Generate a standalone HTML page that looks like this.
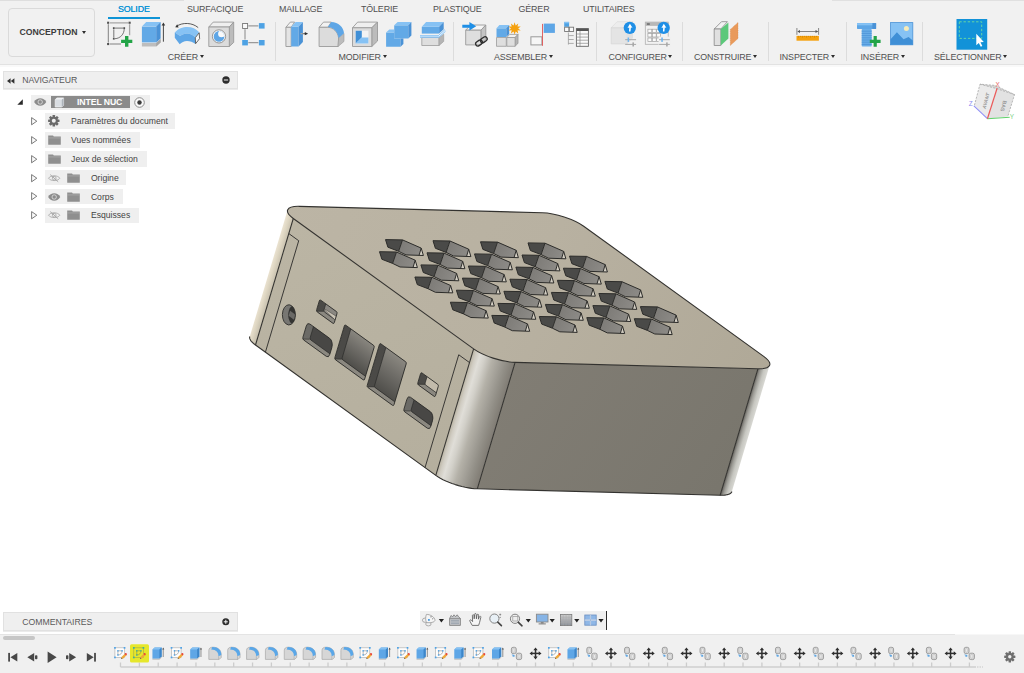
<!DOCTYPE html>
<html lang="fr"><head><meta charset="utf-8"><title>Fusion 360 - INTEL NUC</title>
<style>
html,body{margin:0;padding:0;}
body{width:1024px;height:673px;overflow:hidden;background:#fff;position:relative;font-family:"Liberation Sans",sans-serif;color:#555;}
.abs{position:absolute;}
#toolbar{left:0;top:0;width:1024px;height:64px;background:#f1f1f1;}
#tbline{left:0;top:64px;width:1024px;height:1px;background:#e2e2e2;}
#tbgap{left:0;top:65px;width:1024px;height:2.3px;background:#f9f9f9;}
.tab{position:absolute;top:3.6px;font-size:8.9px;line-height:11px;color:#505050;white-space:nowrap;letter-spacing:-0.13px;}
.tab.on{color:#0f94d6;text-shadow:0 0 0.4px #0f94d6;}
.grp{position:absolute;top:51.5px;font-size:8.9px;line-height:11px;color:#505050;white-space:nowrap;letter-spacing:-0.13px;}
.car{position:absolute;width:0;height:0;border-left:2.9px solid transparent;border-right:2.9px solid transparent;border-top:3.5px solid #2e2e2e;}
.sep{position:absolute;top:22px;width:1px;height:39px;background:#dcdcdc;}
#conc{left:8px;top:8.3px;width:86.8px;height:48.4px;border:1px solid #dadada;border-radius:4px;box-sizing:border-box;}
#conctxt{left:19.4px;top:26.5px;font-size:8.7px;line-height:11px;font-weight:bold;color:#3c3c3c;letter-spacing:0.02px;}
.panel{position:absolute;left:3px;width:235px;background:#efefef;border:1px solid #e1e1e1;box-sizing:border-box;box-shadow:0 0.5px 0.5px rgba(0,0,0,0.08);}
.ptxt{position:absolute;font-size:8.7px;line-height:11px;color:#5a5a5a;letter-spacing:-0.03px;white-space:nowrap;}
.row{position:absolute;height:15.5px;background:#efefef;}
.rtxt{position:absolute;font-size:8.65px;line-height:11px;color:#444;white-space:nowrap;}
svg{position:absolute;overflow:visible;}
</style></head><body>
<div id="toolbar" class="abs"></div><div id="tbline" class="abs"></div><div id="tbgap" class="abs"></div>
<div id="conc" class="abs"></div><div id="conctxt" class="abs">CONCEPTION</div><div class="car" style="left:81.7px;top:31.2px"></div>
<div class="tab on" style="left:118px">SOLIDE</div>
<div class="abs" style="left:108.3px;top:16.6px;width:52px;height:2px;background:#0f94d6"></div>
<div class="tab" style="left:187px">SURFACIQUE</div>
<div class="tab" style="left:279px">MAILLAGE</div>
<div class="tab" style="left:361px">TÔLERIE</div>
<div class="tab" style="left:433px">PLASTIQUE</div>
<div class="tab" style="left:518.5px">GÉRER</div>
<div class="tab" style="left:583px">UTILITAIRES</div>
<div class="grp" style="left:167.7px">CRÉER</div><div class="car" style="left:199.6px;top:54.5px"></div>
<div class="grp" style="left:338.5px">MODIFIER</div><div class="car" style="left:382.5px;top:54.5px"></div>
<div class="grp" style="left:494px">ASSEMBLER</div><div class="car" style="left:548.6px;top:54.5px"></div>
<div class="grp" style="left:608.5px">CONFIGURER</div><div class="car" style="left:668.4px;top:54.5px"></div>
<div class="grp" style="left:694px">CONSTRUIRE</div><div class="car" style="left:752.9px;top:54.5px"></div>
<div class="grp" style="left:779.5px">INSPECTER</div><div class="car" style="left:830.7px;top:54.5px"></div>
<div class="grp" style="left:860.5px">INSÉRER</div><div class="car" style="left:900.6px;top:54.5px"></div>
<div class="grp" style="left:934px">SÉLECTIONNER</div><div class="car" style="left:1003.1px;top:54.5px"></div>
<div class="sep" style="left:275px"></div>
<div class="sep" style="left:453px"></div>
<div class="sep" style="left:596px"></div>
<div class="sep" style="left:682px"></div>
<div class="sep" style="left:768px"></div>
<div class="sep" style="left:846px"></div>
<div class="sep" style="left:922px"></div>
<div class="abs topline" style="left:0;top:0;width:184px;height:1px;background:#dedede"></div><div class="abs topline" style="left:832px;top:0;width:192px;height:1px;background:#e0e0e0"></div>
<svg style="left:0;top:0" width="1024" height="66" viewBox="0 0 1024 66">
<defs>
<linearGradient id="gshaft" x1="0" y1="0" x2="1" y2="0"><stop offset="0" stop-color="#bbb"/><stop offset="1" stop-color="#555"/></linearGradient>
</defs>
<!-- 1 sketch -->
<g>

<path d="M110 22.8 H128.4 M129.6 24.2 V35.2 M110 44 H121" stroke="#a6a6a6" stroke-width="1.3" fill="none"/>
<path d="M108.3 24.2 V42.6" stroke="#666" stroke-width="0.8"/>
<g fill="#505050"><rect x="107.1" y="21.7" width="2.1" height="2.1"/><rect x="128.6" y="21.7" width="2.1" height="2.1"/><rect x="107.1" y="43" width="2.1" height="2.1"/></g>
<path d="M115 28.1 H123 M113.8 29.3 V37.6 M124.2 28.9 C124.2 34 120.4 38.4 115 38.7" stroke="#555" stroke-width="0.8" fill="none"/>
<g fill="#505050"><rect x="112.9" y="27.2" width="1.8" height="1.8"/><rect x="123.3" y="27.2" width="1.8" height="1.8"/><rect x="112.9" y="37.8" width="1.8" height="1.8"/></g>
<path d="M125 36 H128.4 V39.7 H132.3 V43.1 H128.4 V46.8 H125 V43.1 H121.1 V39.7 H125 Z" fill="#22a447"/>
</g>
<!-- 2 extrude -->
<g>
<path d="M141.9 42.9 L156.2 42.9 L160.6 39 L160.6 42.4 L156.2 46.5 L141.9 46.5 Z" fill="#bdbdbd"/><path d="M156.2 42.9 L160.6 39 L160.6 42.4 L156.2 46.5 Z" fill="#a6a6a6"/>
<path d="M141.9 26.6 H156.2 V42.4 H141.9 Z" fill="#62a9e6"/>
<path d="M141.9 26.6 L146.2 21.9 L160.6 21.9 L156.2 26.6 Z" fill="#86c2f4"/>
<path d="M156.2 26.6 L160.6 21.9 L160.6 38.5 L156.2 42.4 Z" fill="#4a92d6"/>
<path d="M163.4 24.6 V41.7" stroke="#333" stroke-width="0.9"/><path d="M161.6 25.5 L163.4 22.5 L165.2 25.5 Z" fill="#333"/>
</g>
<!-- 3 revolve -->
<g>
<path d="M174.8 32.6 C178 28.5 183 27 187.3 27 C192 27 196.2 28.8 199.2 32.3 L195.3 37.5 C193 35 190 33.7 187 33.6 C184.4 33.7 182 34.5 180.2 36.1 Z" fill="#86c2f4"/>
<path d="M174.8 32.6 L180.2 36.1 C182 34.5 184.4 33.7 187 33.6 C190 33.7 193 35 195.3 37.5 L195.5 43.9 C193 42 190 41 187 41 C184 41.2 181.6 42.4 179.7 44.2 L174.8 37.7 Z" fill="#5ea6e6"/>
<path d="M195.3 37.7 L199.2 32.8 L199.6 38.6 L195.6 43.7 Z" fill="#f8f8f8" stroke="#444" stroke-width="0.8" stroke-linejoin="round"/>
<path d="M198.2 27.6 C192 22.4 182.6 22.3 176.6 26.2" stroke="#333" stroke-width="0.8" fill="none"/><path d="M175.2 27.3 L177.2 24.2 L178.6 27.4 Z" fill="#333"/>
</g>
<!-- 4 hole -->
<g stroke="#9a9a9a" stroke-width="0.9" stroke-linejoin="round">
<path d="M208.8 27 L213.2 22.1 L233.7 22.1 L229.3 27 Z" fill="#efefef"/>
<path d="M229.3 27 L233.7 22.1 L233.7 42.4 L229.3 46.5 Z" fill="#bcbcbc"/>
<path d="M208.8 27 H229.3 V46.5 H208.8 Z" fill="#dcdcdc"/>
<circle cx="219" cy="36.4" r="6.6" fill="#fafafa" stroke="#8a8a8a"/>
</g>
<clipPath id="hcp"><circle cx="219" cy="36.4" r="5.3"/></clipPath><circle cx="219" cy="36.4" r="5.3" fill="#5ea6e6"/><circle cx="221.6" cy="33.8" r="3.5" fill="#fafafa" clip-path="url(#hcp)"/>
<!-- 5 pattern -->
<g>
<path d="M248.3 25.8 H258.4 M245 29.2 V39.5 M248.3 42.6 H258.4" stroke="#9a9a9a" stroke-width="1.2"/>
<rect x="242.6" y="23.5" width="5" height="5" fill="#fafafa" stroke="#777" stroke-width="0.9"/>
<rect x="258.9" y="23.1" width="5.7" height="5.5" fill="#4ea2e4"/><rect x="242.2" y="40" width="5.7" height="5.4" fill="#4ea2e4"/><rect x="258.9" y="40" width="5.7" height="5.4" fill="#4ea2e4"/>
</g>
<!-- 6 press pull -->
<g>
<path d="M285.9 27.3 L290.3 22.1 L294.6 22.1 L291.2 27.3 Z" fill="#f2f2f2" stroke="#9a9a9a" stroke-width="0.9" stroke-linejoin="round"/>
<path d="M285.9 27.3 H291.2 V46.5 H285.9 Z" fill="#e4e4e4" stroke="#9a9a9a" stroke-width="0.9" stroke-linejoin="round"/>
<path d="M291.2 26.8 H298.6 V46.5 H291.2 Z" fill="#62a9e6"/>
<path d="M291.2 26.8 L295.6 21.9 L302.9 21.9 L298.6 26.8 Z" fill="#86c2f4"/>
<path d="M298.6 26.8 L302.9 21.9 L302.9 41.9 L298.6 46.5 Z" fill="#4a92d6"/>
<rect x="300.6" y="33" width="5" height="1.3" fill="url(#gshaft)"/><path d="M304.8 32 L308.1 33.65 L304.8 35.3 Z" fill="#2e2e2e"/>
</g>
<!-- 7 fillet -->
<g>
<path d="M319.1 27.3 L323.5 22.1 L331.3 22.1 L327.9 27.3 Z" fill="#f2f2f2" stroke="#9a9a9a" stroke-width="0.9" stroke-linejoin="round"/>
<path d="M319.1 27.3 H327.9 C333.6 27.6 338 32 338.6 38 L338.1 46.5 H319.1 Z" fill="#dcdcdc" stroke="#9a9a9a" stroke-width="0.9" stroke-linejoin="round"/>
<path d="M338.6 38 L344 33.4 L344 41.4 L338.1 46.5 Z" fill="#bcbcbc" stroke="#9a9a9a" stroke-width="0.6" stroke-linejoin="round"/>
<path d="M327.9 27.1 L331.3 22 C338.4 22.4 343.6 27 344 33.3 L338.6 38 C338 32 333.6 27.6 327.9 27.1 Z" fill="#5ea6e6"/>
</g>
<!-- 8 shell -->
<g stroke="#9a9a9a" stroke-width="0.9" stroke-linejoin="round">
<path d="M352.5 27.8 L357.6 22.1 L377.5 22.1 L371.8 27.8 Z" fill="#efefef"/>
<path d="M371.8 27.8 L377.5 22.1 L377.5 41 L371.8 46.5 Z" fill="#bcbcbc"/>
<path d="M352.5 27.8 H371.8 V46.5 H352.5 Z" fill="#dcdcdc"/>
</g>
<rect x="355.7" y="30.7" width="12.7" height="12.9" fill="#f4f4f4"/>
<path d="M355.7 30.7 H361.8 V37.5 L355.7 43.6 Z" fill="#3f8fd6"/><path d="M355.7 43.6 L361.8 37.5 H368.4 V43.6 Z" fill="#86c2f4"/>
<!-- 9 combine -->
<g>
<path d="M394.2 25.3 H408.3 V38.5 H394.2 Z" fill="#62a9e6"/><path d="M394.2 25.3 L397.6 21.9 L411.4 21.9 L408.3 25.3 Z" fill="#86c2f4"/><path d="M408.3 25.3 L411.4 21.9 L411.4 35.6 L408.3 38.5 Z" fill="#4a92d6"/>
<path d="M386.1 32.6 H394.2 V38.5 H400.5 V46.8 H386.1 Z" fill="#62a9e6"/><path d="M386.1 32.6 L389.3 29.5 H394.2 V32.6 Z" fill="#86c2f4"/><path d="M400.5 38.5 H403.4 V43.9 L400.5 46.8 Z" fill="#4a92d6"/>
</g>
<!-- 10 split -->
<g>
<path d="M421.8 37.5 H439.1 V45.5 H421.8 Z" fill="#dedede" stroke="#9a9a9a" stroke-width="0.8"/><path d="M439.1 37.5 L443.7 34.2 V41.4 L439.1 45.5 Z" fill="#b4b4b4" stroke="#9a9a9a" stroke-width="0.6"/>
<path d="M420 36.6 H438.6 L445.2 30.4" stroke="#fff" stroke-width="2" fill="none"/><path d="M420 35.8 H438.3 L444.9 29.7 M420 37.2 H439 L445.6 31.1" stroke="#55aaf0" stroke-width="0.8" fill="none"/>
<path d="M421.8 26.8 H439.1 V33.6 H421.8 Z" fill="#62a9e6"/><path d="M421.8 26.8 L426.1 21.9 L443.7 21.9 L439.1 26.8 Z" fill="#86c2f4"/><path d="M439.1 26.8 L443.7 21.9 L443.7 29.2 L439.1 33.6 Z" fill="#4a92d6"/>
</g>
<!-- 11 derive -->
<g>
<g stroke="#9a9a9a" stroke-width="0.9" stroke-linejoin="round"><path d="M465.7 30.2 L470.6 25 L485.8 25 L480.9 30.2 Z" fill="#f6f6f6"/><path d="M480.9 30.2 L485.8 25 L485.8 39.5 L480.9 44.9 Z" fill="#c4c4c4"/><path d="M465.7 30.2 H480.9 V44.9 H465.7 Z" fill="#dedede"/></g>
<path d="M462.3 24.8 H469.4 V22 L476.2 26.3 L469.4 30.6 V27.8 H462.3 Z" fill="#1f8fe6"/>
<g fill="none" stroke="#2e2e2e" stroke-width="1.3"><rect x="-3.6" y="-2.2" width="7.2" height="4.4" rx="2.2" transform="translate(479 43) rotate(-35)"/><rect x="-3.6" y="-2.2" width="7.2" height="4.4" rx="2.2" transform="translate(483.8 39.8) rotate(-35)"/></g>
</g>
<!-- 12 new component -->
<g>
<g stroke="#9a9a9a" stroke-width="0.8" stroke-linejoin="round"><path d="M496.5 37.5 H506.3 V46.3 H496.5 Z" fill="#dedede"/><path d="M506.8 37.5 L509.7 34.4 H518 L515.1 37.5 Z" fill="#f2f2f2"/><path d="M515.1 37.5 L518 34.4 V43.2 L515.1 46.3 Z" fill="#b4b4b4"/><path d="M506.8 37.5 H515.1 V46.3 H506.8 Z" fill="#dedede"/></g>
<path d="M496.5 28.3 H506.3 V37 H496.5 Z" fill="#62a9e6"/><path d="M496.5 28.3 L499.4 25 H509.2 L506.3 28.3 Z" fill="#86c2f4"/><path d="M506.3 28.3 L509.2 25 V34 L506.3 37 Z" fill="#4a92d6"/>
<path d="M514.6 22.2 L515.7 25.4 L518.3 23.4 L517.5 26.6 L520.7 26.4 L518.2 28.4 L520.7 30.4 L517.5 30.2 L518.3 33.4 L515.7 31.4 L514.6 34.6 L513.5 31.4 L510.9 33.4 L511.7 30.2 L508.5 30.4 L511 28.4 L508.5 26.4 L511.7 26.6 L510.9 23.4 L513.5 25.4 Z" fill="#f5a10f"/>
</g>
<!-- 13 joint -->
<g>
<rect x="530.9" y="36.8" width="11" height="8.1" fill="#f6f6f6" stroke="#999" stroke-width="1"/>
<rect x="543.7" y="23.6" width="11.2" height="9.3" fill="#5ea6e6"/>
<path d="M542.5 23.9 V45.8" stroke="#e05252" stroke-width="0.9"/>
</g>
<!-- 14 rigid group table -->
<g>
<rect x="564.2" y="21.9" width="4.9" height="4.9" fill="#4ea2e4"/><rect x="564.2" y="21.9" width="4.9" height="1.4" fill="#86c2f4"/>
<rect x="564.6" y="27.2" width="4.3" height="4.3" fill="#fafafa" stroke="#777" stroke-width="0.9"/><rect x="569.3" y="27.2" width="4.3" height="4.3" fill="#fafafa" stroke="#777" stroke-width="0.9"/>
<path d="M568.4 32.6 V44.6 M568.4 35.6 H573.7 M568.4 39.5 H573.7 M568.4 43.4 H573.7" stroke="#9a9a9a" stroke-width="0.8" fill="none"/>
<rect x="576.4" y="28.6" width="12" height="17.7" fill="#fafafa" stroke="#666" stroke-width="0.9"/><rect x="576.4" y="28.6" width="12" height="2.4" fill="#555"/>
<path d="M580 31 V46.3 M576.4 34 H588.4 M576.4 37.1 H588.4 M576.4 40.2 H588.4 M576.4 43.3 H588.4" stroke="#888" stroke-width="0.7" fill="none"/>
</g>
<!-- 15 configure -->
<g>
<path d="M611.2 27.8 L617.1 21.7 H633 L627.3 27.8 Z" fill="#ededed" stroke="#d8d8d8" stroke-width="0.6"/><path d="M611.2 27.8 H627.3 V43.9 H611.2 Z" fill="#e4e4e4" stroke="#d4d4d4" stroke-width="0.6"/><path d="M627.3 27.8 L633 21.7 V38 L627.3 43.9 Z" fill="#e0e0e0"/>
<path d="M625.2 39.7 H636.1 M625.2 44.4 H636.1" stroke="#a8a8a8" stroke-width="1"/><rect x="627.6" y="37.5" width="1.5" height="4.4" fill="#6db3ee"/><rect x="632.4" y="42.4" width="1.6" height="4.1" fill="#a8a8a8"/>
<circle cx="629.8" cy="27.8" r="6.15" fill="#1f8fe6"/><path d="M629.9 23.7 L632.5 27.8 L630.9 27.6 L630.5 31.4 L629 31.4 L629.3 27.6 L627.5 27.9 Z" fill="#fff"/>
</g>
<!-- 16 configure table -->
<g>
<rect x="645.3" y="22.1" width="22.9" height="22.2" fill="#f2f2f2" stroke="#b0b0b0" stroke-width="0.8"/><rect x="645.3" y="22.1" width="22.9" height="3.8" fill="#b8b8b8"/><rect x="646.9" y="23.3" width="2.9" height="1.5" fill="#666"/>
<g fill="#fbfbfb" stroke="#a0a0a0" stroke-width="0.7"><rect x="647.9" y="29.2" width="3.9" height="3.4"/><rect x="652.3" y="29.2" width="3.9" height="3.4"/><rect x="656.7" y="29.2" width="3.9" height="3.4"/><rect x="647.9" y="33.6" width="3.9" height="3.4"/><rect x="652.3" y="33.6" width="3.9" height="3.4"/><rect x="656.7" y="33.6" width="3.9" height="3.4"/><rect x="647.9" y="38" width="3.9" height="3.4"/><rect x="652.3" y="38" width="3.9" height="3.4"/><rect x="656.7" y="38" width="3.9" height="3.4"/></g>
<rect x="658.6" y="36.6" width="11.6" height="10.4" fill="#f1f1f1"/>
<path d="M659.1 39.7 H669.8 M659.1 44.4 H669.8" stroke="#a8a8a8" stroke-width="1"/><rect x="661.3" y="37.5" width="1.5" height="4.4" fill="#6db3ee"/><rect x="666.1" y="42.4" width="1.6" height="4.1" fill="#a8a8a8"/>
<circle cx="663.7" cy="27.8" r="6.15" fill="#1f8fe6"/><path d="M663.8 23.7 L666.4 27.8 L664.8 27.6 L664.4 31.4 L662.9 31.4 L663.2 27.6 L661.4 27.9 Z" fill="#fff"/>
</g>
<!-- 17 construct -->
<g>
<path d="M714.2 29 L721.5 21.7 H727.4 L720.8 29 Z" fill="#f2f2f2" stroke="#888" stroke-width="0.8" stroke-linejoin="round"/><path d="M714.2 29 H720.8 V45.5 H714.2 Z" fill="#e0e0e0" stroke="#888" stroke-width="0.8" stroke-linejoin="round"/>
<path d="M720.8 29 L728.4 22.4 V38.5 L720.8 45.5 Z" fill="#5cc87a"/>
<path d="M730.3 29.4 L738 22.4 V38.5 L730.3 45.5 Z" fill="#e99a5b" stroke="#d98a4a" stroke-width="0.5" stroke-dasharray="1 0.8"/>
</g>
<!-- 18 inspect -->
<g>
<path d="M796.9 28 V34.8 M818.6 28 V34.8 M798 31.5 H817.5" stroke="#6a6a6a" stroke-width="0.8" fill="none"/><path d="M797.3 31.5 L800 30.1 V32.9 Z M818.2 31.5 L815.5 30.1 V32.9 Z" fill="#555"/>
<rect x="796.5" y="35.9" width="22.4" height="4.8" fill="#f5a10f"/><path d="M798.5 35.9 V37.6 M800.5 35.9 V37 M802.5 35.9 V37.6 M804.5 35.9 V37 M806.5 35.9 V37.6 M808.5 35.9 V37 M810.5 35.9 V37.6 M812.5 35.9 V37 M814.5 35.9 V37.6 M816.5 35.9 V37" stroke="#c97f00" stroke-width="0.6"/>
</g>
<!-- 19 bolt -->
<g>
<rect x="861.7" y="28.9" width="10" height="17.6" rx="0.8" fill="#6aaee8"/><path d="M861.7 31.2 H871.7 M861.7 33.4 H871.7 M861.7 35.6 H871.7 M861.7 37.8 H871.7 M861.7 40 H871.7 M861.7 42.2 H871.7 M861.7 44.4 H871.7" stroke="#4a92d6" stroke-width="0.8"/>
<rect x="857" y="23.1" width="19.1" height="5.8" rx="0.6" fill="#5ea6e6"/><rect x="857" y="23.1" width="19.1" height="2.2" fill="#86c2f4"/><rect x="872.4" y="23.1" width="3.7" height="5.8" fill="#4a92d6"/>
<path d="M873.6 36 H876.8 V39.8 H880.6 V43 H876.8 V46.8 H873.6 V43 H869.8 V39.8 H873.6 Z" fill="#22a447"/>
</g>
<!-- 20 image -->
<g>
<rect x="890.6" y="22.6" width="22.2" height="22.2" fill="#86c2f4" stroke="#4a92d6" stroke-width="0.8"/>
<path d="M890.6 39.2 L896.9 32.3 L903.5 39.2 L908.6 37 L912.8 40.6 V44.8 H890.6 Z" fill="#3f8fd6"/>
<circle cx="906.4" cy="28.5" r="2.5" fill="#f5ebba"/>
</g>
<!-- 21 select -->
<g>
<rect x="956.5" y="19" width="30.7" height="30.7" fill="#1292d8"/>
<rect x="959.3" y="21.8" width="22.4" height="16.6" fill="none" stroke="#66d4a4" stroke-width="1" stroke-dasharray="2.4 1.8"/>
<path d="M976.3 33.7 L976.3 45.2 L978.8 42.9 L980.8 46.7 L982.3 45.9 L980.5 42.2 L983.8 41.9 Z" fill="#fff"/>
</g>
</svg>
<div class="panel" style="top:70.8px;height:18.7px"></div>
<svg style="left:7px;top:77.5px" width="8" height="6" viewBox="0 0 8 6"><path d="M3.6 0.3 L3.6 5.7 L0 3 Z M7.4 0.3 L7.4 5.7 L3.8 3 Z" fill="#333"/></svg>
<div class="ptxt" style="left:22.3px;top:75.3px">NAVIGATEUR</div>
<svg style="left:221.5px;top:76.3px" width="8" height="8" viewBox="0 0 8 8"><circle cx="4" cy="4" r="3.7" fill="#2c2c2c"/><rect x="1.9" y="3.5" width="4.2" height="1" fill="#efefef"/></svg>

<!-- row 0 -->
<svg style="left:17px;top:99px" width="6" height="6" viewBox="0 0 6 6"><path d="M5.8 0.3 L5.8 5.8 L0.3 5.8 Z" fill="#2b2b2b"/></svg>
<div class="row" style="left:31px;top:94.6px;width:119px;height:15.2px"></div>
<svg class="eye" style="left:33.6px;top:98.2px" width="12.4" height="8" viewBox="0 0 12.4 8"><path d="M0.1 4 C2.6 -0.9 9.8 -0.9 12.3 4 C9.8 8.9 2.6 8.9 0.1 4 Z" fill="#8c8c8c"/><circle cx="6.2" cy="4" r="2.2" fill="none" stroke="#e4e4e4" stroke-width="0.75"/></svg>
<div class="abs" style="left:50.8px;top:96.2px;width:79.5px;height:11.6px;background:#8b8b8b"></div>
<svg style="left:54.4px;top:96.6px" width="11" height="11" viewBox="0 0 11 11"><path d="M1.2 2.6 L3 0.9 L9.6 0.9 L9.6 8.2 L7.8 10 L1.2 10 Z" fill="#d9dde2" stroke="#f4f4f4" stroke-width="0.7"/><path d="M7.8 2.6 L9.6 0.9 L9.6 8.2 L7.8 10 Z" fill="#aeb4bb"/><path d="M1.2 2.6 L3 0.9 L9.6 0.9 L7.8 2.6 Z" fill="#eef0f2"/></svg>
<div class="rtxt" style="left:77px;top:97.3px;color:#fff;font-weight:bold;font-size:8.7px;letter-spacing:-0.1px">INTEL NUC</div>
<svg style="left:134px;top:96.6px" width="11" height="11" viewBox="0 0 11 11"><circle cx="5.5" cy="5.5" r="4.8" fill="#fafafa" stroke="#8a8a8a" stroke-width="1"/><circle cx="5.5" cy="5.5" r="2.2" fill="#3a3a3a"/></svg>
<svg style="left:30.8px;top:116.8px" width="6.4" height="8.4" viewBox="0 0 6.4 8.4"><path d="M0.6 0.6 L5.8 4.2 L0.6 7.8 Z" fill="#fafafa" stroke="#505050" stroke-width="0.75" stroke-linejoin="round"/></svg>
<div class="row" style="left:45.2px;top:113.3px;width:130.0px;height:15.3px"></div>
<svg style="left:48.2px;top:115.2px" width="11.6" height="11.6" viewBox="-5.8 -5.8 11.6 11.6"><g fill="#6a6a6a"><rect x="-1.3" y="-5.7" width="2.6" height="11.4" rx="0.5" transform="rotate(0)"/><rect x="-1.3" y="-5.7" width="2.6" height="11.4" rx="0.5" transform="rotate(45)"/><rect x="-1.3" y="-5.7" width="2.6" height="11.4" rx="0.5" transform="rotate(90)"/><rect x="-1.3" y="-5.7" width="2.6" height="11.4" rx="0.5" transform="rotate(135)"/></g><circle r="4" fill="#6a6a6a"/><circle r="2" fill="#efefef"/></svg>
<div class="rtxt" style="left:71.1px;top:116.0px">Paramètres du document</div>
<svg style="left:30.8px;top:135.8px" width="6.4" height="8.4" viewBox="0 0 6.4 8.4"><path d="M0.6 0.6 L5.8 4.2 L0.6 7.8 Z" fill="#fafafa" stroke="#505050" stroke-width="0.75" stroke-linejoin="round"/></svg>
<div class="row" style="left:45.2px;top:132.3px;width:95.2px;height:15.3px"></div>
<svg style="left:47.5px;top:135.0px" width="13" height="10" viewBox="0 0 13 10"><path d="M0.2 0.4 L5 0.4 L5.8 1.6 L12.8 1.6 L12.8 9.8 L0.2 9.8 Z" fill="#8f8f8f"/><path d="M0.2 2.9 L12.8 2.9" stroke="#b4b4b4" stroke-width="0.6"/></svg>
<div class="rtxt" style="left:71.1px;top:135.0px">Vues nommées</div>
<svg style="left:30.8px;top:154.8px" width="6.4" height="8.4" viewBox="0 0 6.4 8.4"><path d="M0.6 0.6 L5.8 4.2 L0.6 7.8 Z" fill="#fafafa" stroke="#505050" stroke-width="0.75" stroke-linejoin="round"/></svg>
<div class="row" style="left:45.2px;top:151.3px;width:101.6px;height:15.3px"></div>
<svg style="left:47.5px;top:154.0px" width="13" height="10" viewBox="0 0 13 10"><path d="M0.2 0.4 L5 0.4 L5.8 1.6 L12.8 1.6 L12.8 9.8 L0.2 9.8 Z" fill="#8f8f8f"/><path d="M0.2 2.9 L12.8 2.9" stroke="#b4b4b4" stroke-width="0.6"/></svg>
<div class="rtxt" style="left:71.1px;top:154.0px">Jeux de sélection</div>
<svg style="left:30.8px;top:173.6px" width="6.4" height="8.4" viewBox="0 0 6.4 8.4"><path d="M0.6 0.6 L5.8 4.2 L0.6 7.8 Z" fill="#fafafa" stroke="#505050" stroke-width="0.75" stroke-linejoin="round"/></svg>
<div class="row" style="left:45.2px;top:170.1px;width:80.5px;height:15.3px"></div>
<svg style="left:66.8px;top:172.8px" width="13" height="10" viewBox="0 0 13 10"><path d="M0.2 0.4 L5 0.4 L5.8 1.6 L12.8 1.6 L12.8 9.8 L0.2 9.8 Z" fill="#8f8f8f"/><path d="M0.2 2.9 L12.8 2.9" stroke="#b4b4b4" stroke-width="0.6"/></svg>
<svg style="left:47.6px;top:173.6px" width="12.4" height="8.4" viewBox="0 0 12.4 8.4"><path d="M0.5 4.2 C2.7 1 9.7 1 11.9 4.2 C9.7 7.4 2.7 7.4 0.5 4.2 Z" fill="none" stroke="#a2a2a2" stroke-width="0.8"/><circle cx="6.2" cy="4.2" r="1.9" fill="none" stroke="#a2a2a2" stroke-width="0.8"/><path d="M2.2 0.6 L10.2 7.8" stroke="#a2a2a2" stroke-width="0.9"/></svg>
<div class="rtxt" style="left:90.9px;top:172.8px">Origine</div>
<svg style="left:30.8px;top:192.4px" width="6.4" height="8.4" viewBox="0 0 6.4 8.4"><path d="M0.6 0.6 L5.8 4.2 L0.6 7.8 Z" fill="#fafafa" stroke="#505050" stroke-width="0.75" stroke-linejoin="round"/></svg>
<div class="row" style="left:45.2px;top:188.9px;width:77.7px;height:15.3px"></div>
<svg style="left:66.8px;top:191.6px" width="13" height="10" viewBox="0 0 13 10"><path d="M0.2 0.4 L5 0.4 L5.8 1.6 L12.8 1.6 L12.8 9.8 L0.2 9.8 Z" fill="#8f8f8f"/><path d="M0.2 2.9 L12.8 2.9" stroke="#b4b4b4" stroke-width="0.6"/></svg>
<svg style="left:47.6px;top:192.6px" width="12.4" height="8" viewBox="0 0 12.4 8"><path d="M0.1 4 C2.6 -0.9 9.8 -0.9 12.3 4 C9.8 8.9 2.6 8.9 0.1 4 Z" fill="#8c8c8c"/><circle cx="6.2" cy="4" r="2.2" fill="none" stroke="#e4e4e4" stroke-width="0.75"/></svg>
<div class="rtxt" style="left:90.9px;top:191.6px">Corps</div>
<svg style="left:30.8px;top:211.2px" width="6.4" height="8.4" viewBox="0 0 6.4 8.4"><path d="M0.6 0.6 L5.8 4.2 L0.6 7.8 Z" fill="#fafafa" stroke="#505050" stroke-width="0.75" stroke-linejoin="round"/></svg>
<div class="row" style="left:45.2px;top:207.7px;width:93.4px;height:15.3px"></div>
<svg style="left:66.8px;top:210.4px" width="13" height="10" viewBox="0 0 13 10"><path d="M0.2 0.4 L5 0.4 L5.8 1.6 L12.8 1.6 L12.8 9.8 L0.2 9.8 Z" fill="#8f8f8f"/><path d="M0.2 2.9 L12.8 2.9" stroke="#b4b4b4" stroke-width="0.6"/></svg>
<svg style="left:47.6px;top:211.2px" width="12.4" height="8.4" viewBox="0 0 12.4 8.4"><path d="M0.5 4.2 C2.7 1 9.7 1 11.9 4.2 C9.7 7.4 2.7 7.4 0.5 4.2 Z" fill="none" stroke="#a2a2a2" stroke-width="0.8"/><circle cx="6.2" cy="4.2" r="1.9" fill="none" stroke="#a2a2a2" stroke-width="0.8"/><path d="M2.2 0.6 L10.2 7.8" stroke="#a2a2a2" stroke-width="0.9"/></svg>
<div class="rtxt" style="left:90.9px;top:210.4px">Esquisses</div>
<svg style="left:0;top:0" width="1024" height="673" viewBox="0 0 1024 673">
<defs>
<linearGradient id="gff" gradientUnits="userSpaceOnUse" x1="473.6" y1="348.9" x2="515.4" y2="361.4"><stop offset="0" stop-color="#b9b3a3"/><stop offset="0.08" stop-color="#d0ccc2"/><stop offset="0.18" stop-color="#e0deD8"/><stop offset="0.3" stop-color="#d2d0c9"/><stop offset="0.48" stop-color="#b4b1a8"/><stop offset="0.65" stop-color="#a29f97"/><stop offset="0.8" stop-color="#928f87"/><stop offset="0.93" stop-color="#86827a"/><stop offset="1" stop-color="#7f7b74"/></linearGradient>
<linearGradient id="gls" gradientUnits="userSpaceOnUse" x1="287.6" y1="210.1" x2="295.1" y2="212.4"><stop offset="0" stop-color="#ece4d2"/><stop offset="0.5" stop-color="#ddd5c1"/><stop offset="1" stop-color="#c9c2b0"/></linearGradient>
<linearGradient id="grs" gradientUnits="userSpaceOnUse" x1="757.9" y1="368.8" x2="767.7" y2="371.7"><stop offset="0" stop-color="#66645f"/><stop offset="0.25" stop-color="#9a9993"/><stop offset="0.6" stop-color="#c6c6c0"/><stop offset="1" stop-color="#d9d9d4"/></linearGradient>
<linearGradient id="glf" gradientUnits="userSpaceOnUse" x1="297.2" y1="221.3" x2="431.9" y2="472.6"><stop offset="0" stop-color="#bbb5a4"/><stop offset="1" stop-color="#b5af9e"/></linearGradient>
<linearGradient id="grf" gradientUnits="userSpaceOnUse" x1="520.3" y1="362.5" x2="714.9" y2="495.1"><stop offset="0" stop-color="#817d74"/><stop offset="1" stop-color="#79766d"/></linearGradient>
<linearGradient id="gtf" x1="0" y1="0" x2="1" y2="1"><stop offset="0" stop-color="#bcb5a5"/><stop offset="0.5" stop-color="#b8b1a1"/><stop offset="1" stop-color="#afa897"/></linearGradient>
<linearGradient id="gvl" x1="0" y1="0" x2="1" y2="0.3"><stop offset="0" stop-color="#7b7975"/><stop offset="1" stop-color="#8b8985"/></linearGradient>
<linearGradient id="gub" x1="0" y1="0" x2="0" y2="1"><stop offset="0" stop-color="#918e86"/><stop offset="0.5" stop-color="#6f6d68"/><stop offset="1" stop-color="#4f4e4a"/></linearGradient>
<g id="vent"><path d="M0 0 L17 0.3 L13.1 11.7 L2.4 7.6 Z" fill="#4a4a48"/><path d="M17 0.3 L35.7 8.5 L33.6 15.6 L20.5 15.3 L13.1 11.7 Z" fill="url(#gvl)"/><path d="M35.7 8.5 L37.9 15.9 L33.6 15.6 Z" fill="#d3cec3"/><path d="M0 0 L17 0.3 L35.7 8.5 L37.9 15.9 L20.5 15.3 L13.1 11.7 L2.4 7.6 Z M17 0.3 L13.1 11.7 M35.7 8.5 L33.6 15.6" fill="none" stroke="#2c2c2a" stroke-width="1" stroke-linejoin="round"/></g>
</defs>
<path d="M287.6 210.1 L287.5 210.3 L287.5 210.6 L287.4 210.8 L287.4 211.1 L287.5 211.4 L287.5 211.6 L287.6 211.9 L287.6 212.2 L287.7 212.5 L287.9 212.8 L288.0 213.0 L288.2 213.3 L288.3 213.6 L288.5 213.9 L288.7 214.3 L289.0 214.6 L289.2 214.9 L289.5 215.2 L289.8 215.5 L290.1 215.8 L290.5 216.2 L290.8 216.5 L291.2 216.8 L291.6 217.2 L292.0 217.5 L292.4 217.8 L292.8 218.2 L293.3 218.5 L255.5 345.0 L255.0 344.7 L254.6 344.3 L254.2 344.0 L253.8 343.7 L253.4 343.3 L253.0 343.0 L252.7 342.7 L252.3 342.3 L252.0 342.0 L251.7 341.7 L251.4 341.4 L251.2 341.1 L250.9 340.8 L250.7 340.4 L250.5 340.1 L250.4 339.8 L250.2 339.5 L250.1 339.3 L249.9 339.0 L249.8 338.7 L249.8 338.4 L249.7 338.1 L249.7 337.9 L249.6 337.6 L249.6 337.3 L249.7 337.1 L249.7 336.8 L249.8 336.6 Z" fill="url(#gls)"/>
<path d="M293.3 218.5 L473.6 348.9 L435.8 475.4 L255.5 345.0 Z" fill="url(#glf)"/>
<path d="M473.6 348.9 L475.7 350.3 L478.1 351.8 L480.8 353.2 L483.6 354.5 L486.7 355.8 L489.8 357.0 L493.1 358.1 L496.4 359.1 L499.7 360.0 L503.0 360.8 L506.3 361.4 L509.4 361.9 L512.3 362.2 L515.1 362.3 L477.3 488.8 L474.5 488.7 L471.6 488.4 L468.5 487.9 L465.2 487.3 L461.9 486.5 L458.6 485.6 L455.3 484.6 L452.0 483.5 L448.9 482.3 L445.8 481.0 L443.0 479.7 L440.3 478.3 L437.9 476.8 L435.8 475.4 Z" fill="url(#gff)"/>
<path d="M515.1 362.3 L757.9 368.8 L720.1 495.3 L477.3 488.8 Z" fill="url(#grf)"/>
<path d="M757.9 368.8 L758.5 368.8 L759.1 368.8 L759.7 368.8 L760.3 368.8 L760.8 368.7 L761.4 368.7 L761.9 368.7 L762.5 368.6 L763.0 368.6 L763.4 368.5 L763.9 368.4 L764.4 368.3 L764.8 368.2 L765.2 368.1 L765.7 368.0 L766.0 367.9 L766.4 367.8 L766.8 367.7 L767.1 367.5 L767.4 367.4 L767.7 367.2 L768.0 367.0 L768.3 366.9 L768.5 366.7 L768.7 366.5 L768.9 366.3 L769.1 366.1 L769.3 365.9 L769.4 365.7 L769.5 365.5 L769.6 365.2 L769.7 365.0 L731.9 491.5 L731.8 491.7 L731.7 492.0 L731.6 492.2 L731.5 492.4 L731.3 492.6 L731.1 492.8 L730.9 493.0 L730.7 493.2 L730.5 493.4 L730.2 493.5 L729.9 493.7 L729.6 493.9 L729.3 494.0 L729.0 494.2 L728.6 494.3 L728.2 494.4 L727.9 494.5 L727.4 494.6 L727.0 494.7 L726.6 494.8 L726.1 494.9 L725.6 495.0 L725.2 495.1 L724.7 495.1 L724.1 495.2 L723.6 495.2 L723.0 495.2 L722.5 495.3 L721.9 495.3 L721.3 495.3 L720.7 495.3 L720.1 495.3 Z" fill="url(#grs)"/>
<path d="M249.8 336.6 L249.7 336.8 L249.7 337.1 L249.6 337.3 L249.6 337.6 L249.7 337.9 L249.7 338.1 L249.8 338.4 L249.8 338.7 L249.9 339.0 L250.1 339.3 L250.2 339.5 L250.4 339.8 L250.5 340.1 L250.7 340.4 L250.9 340.8 L251.2 341.1 L251.4 341.4 L251.7 341.7 L252.0 342.0 L252.3 342.3 L252.7 342.7 L253.0 343.0 L253.4 343.3 L253.8 343.7 L254.2 344.0 L254.6 344.3 L255.0 344.7 L255.5 345.0 L435.8 475.4 L435.8 475.4 L437.9 476.8 L440.3 478.3 L443.0 479.7 L445.8 481.0 L448.9 482.3 L452.0 483.5 L455.3 484.6 L458.6 485.6 L461.9 486.5 L465.2 487.3 L468.5 487.9 L471.6 488.4 L474.5 488.7 L477.3 488.8 L720.1 495.3 L720.1 495.3 L720.7 495.3 L721.3 495.3 L721.9 495.3 L722.5 495.3 L723.0 495.2 L723.6 495.2 L724.1 495.2 L724.7 495.1 L725.2 495.1 L725.6 495.0 L726.1 494.9 L726.6 494.8 L727.0 494.7 L727.4 494.6 L727.9 494.5 L728.2 494.4 L728.6 494.3 L729.0 494.2 L729.3 494.0 L729.6 493.9 L729.9 493.7 L730.2 493.5 L730.5 493.4 L730.7 493.2 L730.9 493.0 L731.1 492.8 L731.3 492.6 L731.5 492.4 L731.6 492.2 L731.7 492.0 L731.8 491.7 L731.9 491.5" fill="none" stroke="#33322f" stroke-width="1.1" stroke-linejoin="round"/>
<path d="M293.3 218.5 L255.5 345.0" stroke="#33322f" stroke-width="1.05" fill="none"/>
<path d="M473.6 348.9 L435.8 475.4" stroke="#33322f" stroke-width="1.05" fill="none"/>
<path d="M515.1 362.3 L477.3 488.8" stroke="#33322f" stroke-width="1.05" fill="none"/>
<path d="M757.9 368.8 L720.1 495.3" stroke="#33322f" stroke-width="1.05" fill="none"/>
<g transform="matrix(215.7 156.0 -37.8 126.5 275.6 205.7)">
<path d="M0.082 0.119 L0.128 0.119 L0.128 1" fill="none" stroke="#33322f" stroke-width="0.95" vector-effect="non-scaling-stroke"/>
<path d="M0.918 0.108 L0.868 0.108 L0.868 1" fill="none" stroke="#33322f" stroke-width="0.95" vector-effect="non-scaling-stroke"/>
<clipPath id="cps1"><path d="M0.2796 0.4020 L0.3524 0.4020 A0.0046 0.0120 0 0 1 0.3570 0.4140 L0.3570 0.4830 A0.0046 0.0120 0 0 1 0.3524 0.4950 L0.2796 0.4950 A0.0046 0.0120 0 0 1 0.2750 0.4830 L0.2750 0.4140 A0.0046 0.0120 0 0 1 0.2796 0.4020 Z"/></clipPath><g clip-path="url(#cps1)"><path d="M0.2796 0.4020 L0.3524 0.4020 A0.0046 0.0120 0 0 1 0.3570 0.4140 L0.3570 0.4830 A0.0046 0.0120 0 0 1 0.3524 0.4950 L0.2796 0.4950 A0.0046 0.0120 0 0 1 0.2750 0.4830 L0.2750 0.4140 A0.0046 0.0120 0 0 1 0.2796 0.4020 Z" fill="#4b4a47"/><path d="M0.275 0.495 L0.357 0.495 L0.3851 0.4615 L0.3031 0.4615 Z" fill="#8b8880"/><path d="M0.3076 0.3685 L0.3805 0.3685 A0.0046 0.0120 0 0 1 0.3851 0.3805 L0.3851 0.4495 A0.0046 0.0120 0 0 1 0.3805 0.4615 L0.3076 0.4615 A0.0046 0.0120 0 0 1 0.3031 0.4495 L0.3031 0.3805 A0.0046 0.0120 0 0 1 0.3076 0.3685 Z" fill="#8a8781" stroke="#2b2b29" stroke-width="0.7" vector-effect="non-scaling-stroke"/><path d="M0.3031 0.4411 L0.3570 0.4336 L0.3570 0.4615 Z" fill="#cbc4b5"/><path d="M0.3031 0.4411 L0.3570 0.4336" stroke="#3a3a38" stroke-width="0.5" vector-effect="non-scaling-stroke"/><path d="M0.275 0.495 L0.3031 0.4615" stroke="#2b2b29" stroke-width="0.6" vector-effect="non-scaling-stroke"/></g><path d="M0.2796 0.4020 L0.3524 0.4020 A0.0046 0.0120 0 0 1 0.3570 0.4140 L0.3570 0.4830 A0.0046 0.0120 0 0 1 0.3524 0.4950 L0.2796 0.4950 A0.0046 0.0120 0 0 1 0.2750 0.4830 L0.2750 0.4140 A0.0046 0.0120 0 0 1 0.2796 0.4020 Z" fill="none" stroke="#2b2b29" stroke-width="0.9" vector-effect="non-scaling-stroke"/>
<clipPath id="cpr1"><path d="M0.2654 0.6080 L0.3570 0.6080 A0.0190 0.0500 0 0 1 0.3760 0.6580 L0.3760 0.7110 A0.0114 0.0300 0 0 1 0.3646 0.7410 L0.2597 0.7410 A0.0057 0.0150 0 0 1 0.2540 0.7260 L0.2540 0.6380 A0.0114 0.0300 0 0 1 0.2654 0.6080 Z"/></clipPath><g clip-path="url(#cpr1)"><path d="M0.2654 0.6080 L0.3570 0.6080 A0.0190 0.0500 0 0 1 0.3760 0.6580 L0.3760 0.7110 A0.0114 0.0300 0 0 1 0.3646 0.7410 L0.2597 0.7410 A0.0057 0.0150 0 0 1 0.2540 0.7260 L0.2540 0.6380 A0.0114 0.0300 0 0 1 0.2654 0.6080 Z" fill="#6b6a66"/><path d="M0.254 0.741 L0.376 0.741 L0.4041 0.7075 L0.2821 0.7075 Z" fill="#8b8880"/><path d="M0.2935 0.5745 L0.3851 0.5745 A0.0190 0.0500 0 0 1 0.4041 0.6245 L0.4041 0.6775 A0.0114 0.0300 0 0 1 0.3926 0.7075 L0.2878 0.7075 A0.0057 0.0150 0 0 1 0.2821 0.6925 L0.2821 0.6045 A0.0114 0.0300 0 0 1 0.2935 0.5745 Z" fill="#484745" stroke="#2b2b29" stroke-width="0.7" vector-effect="non-scaling-stroke"/><path d="M0.254 0.741 L0.2821 0.7075" stroke="#2b2b29" stroke-width="0.6" vector-effect="non-scaling-stroke"/></g><path d="M0.2654 0.6080 L0.3570 0.6080 A0.0190 0.0500 0 0 1 0.3760 0.6580 L0.3760 0.7110 A0.0114 0.0300 0 0 1 0.3646 0.7410 L0.2597 0.7410 A0.0057 0.0150 0 0 1 0.2540 0.7260 L0.2540 0.6380 A0.0114 0.0300 0 0 1 0.2654 0.6080 Z" fill="none" stroke="#2b2b29" stroke-width="0.9" vector-effect="non-scaling-stroke"/>
<clipPath id="cpu1"><path d="M0.4036 0.4470 L0.5324 0.4470 A0.0046 0.0120 0 0 1 0.5370 0.4590 L0.5370 0.7080 A0.0046 0.0120 0 0 1 0.5324 0.7200 L0.4036 0.7200 A0.0046 0.0120 0 0 1 0.3990 0.7080 L0.3990 0.4590 A0.0046 0.0120 0 0 1 0.4036 0.4470 Z"/></clipPath><g clip-path="url(#cpu1)"><path d="M0.4036 0.4470 L0.5324 0.4470 A0.0046 0.0120 0 0 1 0.5370 0.4590 L0.5370 0.7080 A0.0046 0.0120 0 0 1 0.5324 0.7200 L0.4036 0.7200 A0.0046 0.0120 0 0 1 0.3990 0.7080 L0.3990 0.4590 A0.0046 0.0120 0 0 1 0.4036 0.4470 Z" fill="#4b4a47"/><path d="M0.399 0.72 L0.537 0.72 L0.5651 0.6865 L0.4271 0.6865 Z" fill="#8b8880"/><path d="M0.4316 0.4135 L0.5605 0.4135 A0.0046 0.0120 0 0 1 0.5651 0.4255 L0.5651 0.6745 A0.0046 0.0120 0 0 1 0.5605 0.6865 L0.4316 0.6865 A0.0046 0.0120 0 0 1 0.4271 0.6745 L0.4271 0.4255 A0.0046 0.0120 0 0 1 0.4316 0.4135 Z" fill="url(#gub)" stroke="#2b2b29" stroke-width="0.7" vector-effect="non-scaling-stroke"/><path d="M0.399 0.72 L0.4271 0.6865" stroke="#2b2b29" stroke-width="0.6" vector-effect="non-scaling-stroke"/></g><path d="M0.4036 0.4470 L0.5324 0.4470 A0.0046 0.0120 0 0 1 0.5370 0.4590 L0.5370 0.7080 A0.0046 0.0120 0 0 1 0.5324 0.7200 L0.4036 0.7200 A0.0046 0.0120 0 0 1 0.3990 0.7080 L0.3990 0.4590 A0.0046 0.0120 0 0 1 0.4036 0.4470 Z" fill="none" stroke="#2b2b29" stroke-width="0.9" vector-effect="non-scaling-stroke"/>
<clipPath id="cpu2"><path d="M0.5586 0.4030 L0.6734 0.4030 A0.0046 0.0120 0 0 1 0.6780 0.4150 L0.6780 0.7360 A0.0046 0.0120 0 0 1 0.6734 0.7480 L0.5586 0.7480 A0.0046 0.0120 0 0 1 0.5540 0.7360 L0.5540 0.4150 A0.0046 0.0120 0 0 1 0.5586 0.4030 Z"/></clipPath><g clip-path="url(#cpu2)"><path d="M0.5586 0.4030 L0.6734 0.4030 A0.0046 0.0120 0 0 1 0.6780 0.4150 L0.6780 0.7360 A0.0046 0.0120 0 0 1 0.6734 0.7480 L0.5586 0.7480 A0.0046 0.0120 0 0 1 0.5540 0.7360 L0.5540 0.4150 A0.0046 0.0120 0 0 1 0.5586 0.4030 Z" fill="#4b4a47"/><path d="M0.554 0.748 L0.678 0.748 L0.7061 0.7145 L0.5821 0.7145 Z" fill="#8b8880"/><path d="M0.5866 0.3695 L0.7015 0.3695 A0.0046 0.0120 0 0 1 0.7061 0.3815 L0.7061 0.7025 A0.0046 0.0120 0 0 1 0.7015 0.7145 L0.5866 0.7145 A0.0046 0.0120 0 0 1 0.5821 0.7025 L0.5821 0.3815 A0.0046 0.0120 0 0 1 0.5866 0.3695 Z" fill="url(#gub)" stroke="#2b2b29" stroke-width="0.7" vector-effect="non-scaling-stroke"/><path d="M0.554 0.748 L0.5821 0.7145" stroke="#2b2b29" stroke-width="0.6" vector-effect="non-scaling-stroke"/></g><path d="M0.5586 0.4030 L0.6734 0.4030 A0.0046 0.0120 0 0 1 0.6780 0.4150 L0.6780 0.7360 A0.0046 0.0120 0 0 1 0.6734 0.7480 L0.5586 0.7480 A0.0046 0.0120 0 0 1 0.5540 0.7360 L0.5540 0.4150 A0.0046 0.0120 0 0 1 0.5586 0.4030 Z" fill="none" stroke="#2b2b29" stroke-width="0.9" vector-effect="non-scaling-stroke"/>
<clipPath id="cps2"><path d="M0.7486 0.3990 L0.8214 0.3990 A0.0046 0.0120 0 0 1 0.8260 0.4110 L0.8260 0.4820 A0.0046 0.0120 0 0 1 0.8214 0.4940 L0.7486 0.4940 A0.0046 0.0120 0 0 1 0.7440 0.4820 L0.7440 0.4110 A0.0046 0.0120 0 0 1 0.7486 0.3990 Z"/></clipPath><g clip-path="url(#cps2)"><path d="M0.7486 0.3990 L0.8214 0.3990 A0.0046 0.0120 0 0 1 0.8260 0.4110 L0.8260 0.4820 A0.0046 0.0120 0 0 1 0.8214 0.4940 L0.7486 0.4940 A0.0046 0.0120 0 0 1 0.7440 0.4820 L0.7440 0.4110 A0.0046 0.0120 0 0 1 0.7486 0.3990 Z" fill="#4b4a47"/><path d="M0.744 0.494 L0.826 0.494 L0.8540 0.4605 L0.7721 0.4605 Z" fill="#8b8880"/><path d="M0.7766 0.3655 L0.8495 0.3655 A0.0046 0.0120 0 0 1 0.8540 0.3775 L0.8540 0.4485 A0.0046 0.0120 0 0 1 0.8495 0.4605 L0.7766 0.4605 A0.0046 0.0120 0 0 1 0.7721 0.4485 L0.7721 0.3775 A0.0046 0.0120 0 0 1 0.7766 0.3655 Z" fill="#c2bbab" stroke="#2b2b29" stroke-width="0.7" vector-effect="non-scaling-stroke"/><path d="M0.744 0.494 L0.7721 0.4605" stroke="#2b2b29" stroke-width="0.6" vector-effect="non-scaling-stroke"/></g><path d="M0.7486 0.3990 L0.8214 0.3990 A0.0046 0.0120 0 0 1 0.8260 0.4110 L0.8260 0.4820 A0.0046 0.0120 0 0 1 0.8214 0.4940 L0.7486 0.4940 A0.0046 0.0120 0 0 1 0.7440 0.4820 L0.7440 0.4110 A0.0046 0.0120 0 0 1 0.7486 0.3990 Z" fill="none" stroke="#2b2b29" stroke-width="0.9" vector-effect="non-scaling-stroke"/>
<clipPath id="cpr2"><path d="M0.7324 0.6110 L0.8240 0.6110 A0.0190 0.0500 0 0 1 0.8430 0.6610 L0.8430 0.7030 A0.0114 0.0300 0 0 1 0.8316 0.7330 L0.7267 0.7330 A0.0057 0.0150 0 0 1 0.7210 0.7180 L0.7210 0.6410 A0.0114 0.0300 0 0 1 0.7324 0.6110 Z"/></clipPath><g clip-path="url(#cpr2)"><path d="M0.7324 0.6110 L0.8240 0.6110 A0.0190 0.0500 0 0 1 0.8430 0.6610 L0.8430 0.7030 A0.0114 0.0300 0 0 1 0.8316 0.7330 L0.7267 0.7330 A0.0057 0.0150 0 0 1 0.7210 0.7180 L0.7210 0.6410 A0.0114 0.0300 0 0 1 0.7324 0.6110 Z" fill="#6b6a66"/><path d="M0.721 0.733 L0.843 0.733 L0.8710 0.6995 L0.7490 0.6995 Z" fill="#8b8880"/><path d="M0.7604 0.5775 L0.8520 0.5775 A0.0190 0.0500 0 0 1 0.8710 0.6275 L0.8710 0.6695 A0.0114 0.0300 0 0 1 0.8597 0.6995 L0.7548 0.6995 A0.0057 0.0150 0 0 1 0.7490 0.6845 L0.7490 0.6075 A0.0114 0.0300 0 0 1 0.7604 0.5775 Z" fill="#484745" stroke="#2b2b29" stroke-width="0.7" vector-effect="non-scaling-stroke"/><path d="M0.721 0.733 L0.7490 0.6995" stroke="#2b2b29" stroke-width="0.6" vector-effect="non-scaling-stroke"/></g><path d="M0.7324 0.6110 L0.8240 0.6110 A0.0190 0.0500 0 0 1 0.8430 0.6610 L0.8430 0.7030 A0.0114 0.0300 0 0 1 0.8316 0.7330 L0.7267 0.7330 A0.0057 0.0150 0 0 1 0.7210 0.7180 L0.7210 0.6410 A0.0114 0.0300 0 0 1 0.7324 0.6110 Z" fill="none" stroke="#2b2b29" stroke-width="0.9" vector-effect="non-scaling-stroke"/>
<clipPath id="cpa"><ellipse cx="0.175" cy="0.647" rx="0.0274" ry="0.0723"/></clipPath>
<g clip-path="url(#cpa)"><ellipse cx="0.175" cy="0.647" rx="0.0274" ry="0.0723" fill="#777672"/><ellipse cx="0.1974" cy="0.6202" rx="0.0274" ry="0.0723" fill="#343432"/><rect x="0.175" y="0.615" width="0.05" height="0.04" fill="#6a6966"/></g>
<ellipse cx="0.175" cy="0.647" rx="0.0274" ry="0.0723" fill="none" stroke="#2b2b29" stroke-width="0.9" vector-effect="non-scaling-stroke"/>
</g>
<rect x="0" y="0" width="1" height="1" rx="0.082" ry="0.082" transform="matrix(290.4 7.7 215.7 156.0 275.6 205.7)" fill="url(#gtf)" stroke="#33322f" stroke-width="1.1" vector-effect="non-scaling-stroke"/>
<use href="#vent" x="385.5" y="239.6"/>
<use href="#vent" x="379.5" y="251.7"/>
<use href="#vent" x="433.0" y="240.7"/>
<use href="#vent" x="427.0" y="252.8"/>
<use href="#vent" x="420.9" y="264.9"/>
<use href="#vent" x="414.9" y="277.0"/>
<use href="#vent" x="480.5" y="241.8"/>
<use href="#vent" x="474.5" y="253.9"/>
<use href="#vent" x="468.4" y="266.0"/>
<use href="#vent" x="462.4" y="278.1"/>
<use href="#vent" x="456.4" y="290.2"/>
<use href="#vent" x="450.4" y="302.2"/>
<use href="#vent" x="528.0" y="242.9"/>
<use href="#vent" x="522.0" y="255.0"/>
<use href="#vent" x="515.9" y="267.1"/>
<use href="#vent" x="509.9" y="279.2"/>
<use href="#vent" x="503.9" y="291.3"/>
<use href="#vent" x="497.9" y="303.4"/>
<use href="#vent" x="491.8" y="315.4"/>
<use href="#vent" x="569.5" y="256.1"/>
<use href="#vent" x="563.4" y="268.2"/>
<use href="#vent" x="557.4" y="280.3"/>
<use href="#vent" x="551.4" y="292.4"/>
<use href="#vent" x="545.4" y="304.4"/>
<use href="#vent" x="539.3" y="316.5"/>
<use href="#vent" x="604.9" y="281.4"/>
<use href="#vent" x="598.9" y="293.5"/>
<use href="#vent" x="592.9" y="305.6"/>
<use href="#vent" x="586.8" y="317.6"/>
<use href="#vent" x="640.4" y="306.6"/>
<use href="#vent" x="634.3" y="318.7"/>
</svg>
<svg style="left:960px;top:70px" width="64" height="60" viewBox="960 70 64 60">
<path d="M987.4 118.7 L974.4 105.3 L980 84.2 L996.7 88.6 Z" fill="#ebebeb"/>
<path d="M987.4 118.7 L996.7 88.6 L1014.5 94.6 L1007.8 116.5 Z" fill="#e2e2e2"/>
<path d="M980 84.2 L995 85.4 L1014.5 94.6 L996.7 88.6 Z" fill="#d4d4d4"/>
<path d="M974.4 105.3 L980 84.2 L995 85.4 L1014.5 94.6 L1007.8 116.5 M980 84.2 L996.7 88.6 L1014.5 94.6" fill="none" stroke="#a8a8a8" stroke-width="0.8" stroke-dasharray="2.2 1.2"/>
<text transform="translate(985.4 109.2) rotate(-75) skewX(-12)" font-family="Liberation Sans, sans-serif" font-size="4.8" font-weight="bold" fill="#969696" letter-spacing="0.1">AVANT</text>
<text transform="translate(1003.2 100.6) rotate(106) skewX(10)" font-family="Liberation Sans, sans-serif" font-size="5.2" font-weight="bold" fill="#969696">BAS</text>
<path d="M987.4 118.7 L973.9 105.9" stroke="#8f8ff5" stroke-width="1.1"/>
<path d="M987.4 118.7 L1009.7 117.2" stroke="#5fd06a" stroke-width="1.1"/>
<path d="M987.4 118.7 L997.1 88.3" stroke="#ea5a5a" stroke-width="1.2"/>
<text x="995.6" y="86.6" font-family="Liberation Sans, sans-serif" font-size="6.4" fill="#e86a6a">X</text>
<text x="968.8" y="106.3" font-family="Liberation Sans, sans-serif" font-size="6.4" fill="#8a8af0">Z</text>
<text x="1009.8" y="119" font-family="Liberation Sans, sans-serif" font-size="6.4" fill="#7ad184">Y</text>
</svg>
<div class="panel" style="top:612.3px;height:18.8px"></div>
<div class="ptxt" style="left:22.3px;top:617.1px">COMMENTAIRES</div>
<svg style="left:221.8px;top:618px" width="7.6" height="7.6" viewBox="0 0 8 8"><circle cx="4" cy="4" r="3.7" fill="#2c2c2c"/><rect x="1.9" y="3.45" width="4.2" height="1.1" fill="#efefef"/><rect x="3.45" y="1.9" width="1.1" height="4.2" fill="#efefef"/></svg>
<div class="abs" style="left:0;top:634.3px;width:1024px;height:38.7px;background:#f0f0f0"></div>
<div class="abs" style="left:0;top:634px;width:1024px;height:1px;background:#e4e4e4"></div>
<div class="abs" style="left:2.5px;top:635.6px;width:32px;height:4px;border-radius:2px;background:#c6c6c6"></div>
<div class="abs" style="left:955px;top:633.6px;width:69px;height:1.2px;background:#f7f7f7"></div>
<svg style="left:0;top:645px" width="110" height="24" viewBox="0 645 110 24">
<g fill="#484848">
<rect x="8.2" y="652.9" width="1.8" height="8.7"/><path d="M17.3 652.9 L17.3 661.6 L10.4 657.25 Z"/>
<path d="M34.2 652.9 L34.2 661.6 L27.3 657.25 Z"/><rect x="35" y="655.3" width="2.4" height="3.9" rx="0.8"/>
<path d="M47.6 651.4 L56.6 657.2 L47.6 663 Z"/>
<path d="M69.2 652.9 L69.2 661.6 L76.1 657.25 Z"/><rect x="66" y="655.3" width="2.4" height="3.9" rx="0.8"/>
<path d="M86.8 652.9 L86.8 661.6 L93.7 657.25 Z"/><rect x="94.1" y="652.9" width="1.8" height="8.7"/>
</g></svg>
<svg style="left:0;top:640px" width="1024" height="33" viewBox="0 640 1024 33">
<defs>
<g id="isk"><rect x="-5.6" y="-5.6" width="9.6" height="9.6" fill="#fdfdfd" stroke="#b4b4b4" stroke-width="0.7"/>
<path d="M-2.6 -2.6 L1.6 -2.6 C1.6 0 0 1.6 -2.6 1.6 Z" fill="none" stroke="#9a9a9a" stroke-width="0.7"/>
<g fill="#4da3e8"><rect x="-6.4" y="-6.4" width="1.7" height="1.7"/><rect x="3.2" y="-6.4" width="1.7" height="1.7"/><rect x="-6.4" y="3.2" width="1.7" height="1.7"/><rect x="-3.3" y="-3.3" width="1.4" height="1.4"/><rect x="0.9" y="-3.3" width="1.4" height="1.4"/><rect x="-3.3" y="0.9" width="1.4" height="1.4"/></g>
<path d="M0.6 5.6 L1.2 3.4 L4.6 0 L6.2 1.6 L2.8 5 Z" fill="#f0a93a"/><path d="M4.1 0.5 L4.9 -0.3 C5.5 -0.9 6.9 0.5 6.3 1.1 L5.7 2.1 Z" fill="#e8403a"/><path d="M0.6 5.6 L1.0 4.2 L2.0 5.2 Z" fill="#555"/></g>
<g id="ish"><rect x="-5.6" y="-5.6" width="9.6" height="9.6" fill="none" stroke="#a8b04a" stroke-width="0.7"/>
<path d="M-2.6 -2.6 L1.6 -2.6 C1.6 0 0 1.6 -2.6 1.6 Z" fill="none" stroke="#8f9a40" stroke-width="0.7"/>
<g fill="#3fb0a0"><rect x="-6.4" y="-6.4" width="1.7" height="1.7"/><rect x="3.2" y="-6.4" width="1.7" height="1.7"/><rect x="-6.4" y="3.2" width="1.7" height="1.7"/><rect x="-3.3" y="-3.3" width="1.4" height="1.4"/><rect x="0.9" y="-3.3" width="1.4" height="1.4"/><rect x="-3.3" y="0.9" width="1.4" height="1.4"/></g>
<path d="M0.6 5.6 L1.2 3.4 L4.6 0 L6.2 1.6 L2.8 5 Z" fill="#f0a93a"/><path d="M4.1 0.5 L4.9 -0.3 C5.5 -0.9 6.9 0.5 6.3 1.1 L5.7 2.1 Z" fill="#e8403a"/><path d="M0.6 5.6 L1.0 4.2 L2.0 5.2 Z" fill="#555"/></g>
<g id="icb"><path d="M-5.8 -3.8 L-3.6 -6 L3.4 -6 L3.4 3.2 L1.2 5.4 L-5.8 5.4 Z" fill="#5ea6e6"/><path d="M-5.8 -3.8 L-3.6 -6 L3.4 -6 L1.2 -3.8 Z" fill="#86c1f2"/><path d="M1.2 -3.8 L3.4 -6 L3.4 3.2 L1.2 5.4 Z" fill="#3d86c9"/>
<path d="M-5.8 5.4 L1.2 5.4 L3.4 3.2 L3.4 4.2 L1.2 6.4 L-5.8 6.4 Z" fill="#bdbdbd"/><path d="M5 -5 L5 3.6" stroke="#666" stroke-width="0.7"/><path d="M4 -4 L5 -5.8 L6 -4 Z" fill="#555"/></g>
<g id="ifl"><path d="M-6 -2.8 C-6 -5.2 -4.6 -6.2 -2 -6.2 C3 -6.2 6.4 -3.4 6.4 1.4 L6.4 4 L4.4 6 L-6 6 Z" fill="#d6d6d6" stroke="#a8a8a8" stroke-width="0.7"/>
<path d="M-2.6 -6.3 C3.2 -6.5 6.6 -3.2 6.5 1.6 L3.6 2.8 C3.8 -1 1.4 -3.6 -3.6 -3.8 Z" fill="#5aa7e8"/><path d="M3.8 2.8 L3.8 6" stroke="#aaa" stroke-width="0.6" fill="none"/></g>
<g id="icp"><rect x="-5.3" y="-6.1" width="4.9" height="6.3" rx="1.7" fill="#d9d9d9" stroke="#8e8e8e" stroke-width="0.8"/><rect x="-3.7" y="-4.6" width="1.7" height="3.3" rx="0.5" fill="#f2f2f2" stroke="#b0b0b0" stroke-width="0.4"/>
<rect x="-0.3" y="-0.2" width="5.3" height="6.4" rx="1.7" fill="#d9d9d9" stroke="#8e8e8e" stroke-width="0.8"/><rect x="1.5" y="1.3" width="1.8" height="3.4" rx="0.5" fill="#f2f2f2" stroke="#b0b0b0" stroke-width="0.4"/>
<path d="M-4.8 1.4 L-2.4 2.6 M-3.4 1.2 L-2.2 2.7 L-4 3" stroke="#4a9be0" stroke-width="0.8" fill="none"/></g>
<g id="imv" fill="#2e2e2e"><rect x="-3.6" y="-0.75" width="7.2" height="1.5"/><rect x="-0.75" y="-3.6" width="1.5" height="7.2"/>
<path d="M0 -6 L2.2 -3.2 L-2.2 -3.2 Z M0 6 L2.2 3.2 L-2.2 3.2 Z M-6 0 L-3.2 -2.2 L-3.2 2.2 Z M6 0 L3.2 -2.2 L3.2 2.2 Z"/></g>
</defs>
<path d="M120.5 667 L976 667" stroke="#cfcfcf" stroke-width="1.5" fill="none"/>
<path d="M977 667 L983 667" stroke="#c6c6c6" stroke-width="1" stroke-dasharray="1.5 1" fill="none"/>
<path d="M120.50 662.4 V667 M139.37 662.4 V667 M158.23 662.4 V667 M177.09 662.4 V667 M195.96 662.4 V667 M214.82 662.4 V667 M233.69 662.4 V667 M252.55 662.4 V667 M271.42 662.4 V667 M290.28 662.4 V667 M309.15 662.4 V667 M328.01 662.4 V667 M346.88 662.4 V667 M365.75 662.4 V667 M384.61 662.4 V667 M403.47 662.4 V667 M422.34 662.4 V667 M441.20 662.4 V667 M460.07 662.4 V667 M478.93 662.4 V667 M497.80 662.4 V667 M516.66 662.4 V667 M535.53 662.4 V667 M554.39 662.4 V667 M573.26 662.4 V667 M592.12 662.4 V667 M610.99 662.4 V667 M629.86 662.4 V667 M648.72 662.4 V667 M667.58 662.4 V667 M686.45 662.4 V667 M705.31 662.4 V667 M724.18 662.4 V667 M743.04 662.4 V667 M761.91 662.4 V667 M780.77 662.4 V667 M799.64 662.4 V667 M818.50 662.4 V667 M837.37 662.4 V667 M856.23 662.4 V667 M875.10 662.4 V667 M893.96 662.4 V667 M912.83 662.4 V667 M931.69 662.4 V667 M950.56 662.4 V667 M969.42 662.4 V667 " stroke="#cccccc" stroke-width="1.3" fill="none"/>
<rect x="130" y="644.2" width="19" height="18.4" rx="1.6" fill="#e6e72c"/>
<use href="#isk" x="120.50" y="653.4"/>
<use href="#ish" x="139.37" y="653.4"/>
<use href="#icb" x="158.23" y="653.4"/>
<use href="#isk" x="177.09" y="653.4"/>
<use href="#icb" x="195.96" y="653.4"/>
<use href="#ifl" x="214.82" y="653.4"/>
<use href="#ifl" x="233.69" y="653.4"/>
<use href="#ifl" x="252.55" y="653.4"/>
<use href="#ifl" x="271.42" y="653.4"/>
<use href="#ifl" x="290.28" y="653.4"/>
<use href="#ifl" x="309.15" y="653.4"/>
<use href="#ifl" x="328.01" y="653.4"/>
<use href="#ifl" x="346.88" y="653.4"/>
<use href="#isk" x="365.75" y="653.4"/>
<use href="#icb" x="384.61" y="653.4"/>
<use href="#isk" x="403.47" y="653.4"/>
<use href="#icb" x="422.34" y="653.4"/>
<use href="#isk" x="441.20" y="653.4"/>
<use href="#icb" x="460.07" y="653.4"/>
<use href="#isk" x="478.93" y="653.4"/>
<use href="#icb" x="497.80" y="653.4"/>
<use href="#icp" x="516.66" y="653.4"/>
<use href="#imv" x="535.53" y="653.4"/>
<use href="#isk" x="554.39" y="653.4"/>
<use href="#icb" x="573.26" y="653.4"/>
<use href="#icp" x="592.12" y="653.4"/>
<use href="#imv" x="610.99" y="653.4"/>
<use href="#icp" x="629.86" y="653.4"/>
<use href="#imv" x="648.72" y="653.4"/>
<use href="#icp" x="667.58" y="653.4"/>
<use href="#imv" x="686.45" y="653.4"/>
<use href="#icp" x="705.31" y="653.4"/>
<use href="#imv" x="724.18" y="653.4"/>
<use href="#icp" x="743.04" y="653.4"/>
<use href="#imv" x="761.91" y="653.4"/>
<use href="#icp" x="780.77" y="653.4"/>
<use href="#imv" x="799.64" y="653.4"/>
<use href="#icp" x="818.50" y="653.4"/>
<use href="#imv" x="837.37" y="653.4"/>
<use href="#icp" x="856.23" y="653.4"/>
<use href="#imv" x="875.10" y="653.4"/>
<use href="#icp" x="893.96" y="653.4"/>
<use href="#imv" x="912.83" y="653.4"/>
<use href="#icp" x="931.69" y="653.4"/>
<use href="#imv" x="950.56" y="653.4"/>
<use href="#icp" x="969.42" y="653.4"/>
</svg>
<svg style="left:1003.6px;top:651.2px" width="11.6" height="11.6" viewBox="-5.8 -5.8 11.6 11.6"><g fill="#6e6e6e"><rect x="-1.25" y="-5.6" width="2.5" height="11.2" rx="0.5" transform="rotate(0)"/><rect x="-1.25" y="-5.6" width="2.5" height="11.2" rx="0.5" transform="rotate(45)"/><rect x="-1.25" y="-5.6" width="2.5" height="11.2" rx="0.5" transform="rotate(90)"/><rect x="-1.25" y="-5.6" width="2.5" height="11.2" rx="0.5" transform="rotate(135)"/></g><circle r="3.9" fill="#6e6e6e"/><circle r="1.7" fill="#f0f0f0"/></svg>
<div class="abs" style="left:420px;top:610.8px;width:186.4px;height:19.3px;background:#f0f0f0"></div>
<div class="abs" style="left:605.9px;top:610.8px;width:1.1px;height:19.4px;background:#2b2b2b"></div>
<svg style="left:415px;top:605px" width="200" height="35" viewBox="415 605 200 35">
<g fill="none" stroke="#9a9a9a" stroke-width="0.8"><ellipse cx="425.3" cy="620.2" rx="2.9" ry="2.2"/><ellipse cx="428.4" cy="624" rx="2.7" ry="1.9"/></g><path d="M426.4 614.4 C430.2 614.2 435 617.4 435 620.2 C435 622.4 430 623 426.4 622.6 C425.4 620 425.4 617 426.4 614.4 Z" fill="#f5f5f5" stroke="#9a9a9a" stroke-width="0.8"/><rect x="428" y="619" width="1.8" height="1.8" fill="#4a9be0"/><path d="M430.2 616.4 L431.8 616.6 L431 617.8 Z M432.2 618.2 L433.6 618.8 L432.4 619.6 Z" fill="#555"/>
<path d="M438.8 619.0 L444.0 619.0 L441.4 622.4000000000001 Z" fill="#222"/>
<path d="M449.6 618.4 L451.2 615.4 L452.6 616.8 L454 614.8 L455.6 616.6 L457.2 614.8 L458.6 616.8 L460.4 618.4 L460.4 625.4 L449.6 625.4 Z" fill="#c4c6c9" stroke="#7a7a7a" stroke-width="0.8" stroke-linejoin="round"/><path d="M449.6 618.6 H460.4" stroke="#7a7a7a" stroke-width="0.7"/><path d="M451 620.4 H459 M451 622 H459 M451 623.6 H459" stroke="#8e99a6" stroke-width="0.7"/>
<path d="M472.2 625.4 L470 621.4 C469.2 620 470.6 619.2 471.6 620.4 L472.6 621.6 L472.4 615.6 C472.4 614.4 474 614.4 474 615.6 L474.2 618.8 L474.6 614.4 C474.6 613.2 476.2 613.2 476.2 614.4 L476.4 618.8 L477 615 C477.2 613.8 478.6 614 478.6 615.2 L478.4 619.2 L479.4 616.8 C479.8 615.8 481.2 616.2 480.8 617.4 L479.6 622.4 L478.6 625.4 Z" fill="#f6f6f6" stroke="#555" stroke-width="0.8" stroke-linejoin="round"/>
<circle cx="494.4" cy="618.6" r="4.6" fill="#e8f0f6" stroke="#777" stroke-width="0.9"/><path d="M497.8 622.2 L501.4 625.6" stroke="#444" stroke-width="1.6" stroke-linecap="round"/><path d="M499.2 614.6 L501.2 614.6 M500.2 613.6 L500.2 615.6 M499.4 617.4 L501 617.4" stroke="#666" stroke-width="0.6"/>
<circle cx="515" cy="618.8" r="4.6" fill="#eeeeee" stroke="#777" stroke-width="0.9"/><rect x="512.8" y="616.4" width="5" height="4.6" fill="none" stroke="#999" stroke-width="0.7"/><path d="M518.4 622.4 L522 625.8" stroke="#444" stroke-width="1.6" stroke-linecap="round"/>
<path d="M525.7 619.0 L530.9 619.0 L528.3 622.4000000000001 Z" fill="#222"/>
<rect x="536.4" y="614.2" width="11.6" height="7.8" fill="#86b4e6" stroke="#8a8a8a" stroke-width="0.9"/><rect x="540.8" y="622.2" width="2.8" height="1.3" fill="#7a7a7a"/><rect x="538.6" y="623.4" width="7.2" height="1" fill="#7a7a7a"/>
<path d="M549.6 619.0 L554.8 619.0 L552.2 622.4000000000001 Z" fill="#222"/>
<linearGradient id="ggr" x1="0" y1="0" x2="0" y2="1"><stop offset="0" stop-color="#cfcfcf"/><stop offset="1" stop-color="#8a8f98"/></linearGradient><rect x="560.4" y="614.4" width="11.4" height="11.2" fill="url(#ggr)" stroke="#7a7a7a" stroke-width="0.8"/><path d="M563.2 614.4 V625.6 M566.1 614.4 V625.6 M569 614.4 V625.6 M560.4 617.2 H571.8 M560.4 620 H571.8 M560.4 622.8 H571.8" stroke="#a8a8a8" stroke-width="0.5"/>
<path d="M574.2 619.0 L579.4 619.0 L576.8 622.4000000000001 Z" fill="#222"/>
<rect x="584.8" y="615" width="11.4" height="10.2" fill="#8fb7e6" stroke="#6a8ec0" stroke-width="0.8"/><path d="M590.5 615 V625.2 M584.8 620.1 H596.2" stroke="#e8eef6" stroke-width="1.1"/><path d="M590.5 615 V625.2 M584.8 620.1 H596.2" stroke="#6a8ec0" stroke-width="0.4"/>
<path d="M598.4 619.0 L603.6 619.0 L601.0 622.4000000000001 Z" fill="#222"/>
</svg>
</body></html>
